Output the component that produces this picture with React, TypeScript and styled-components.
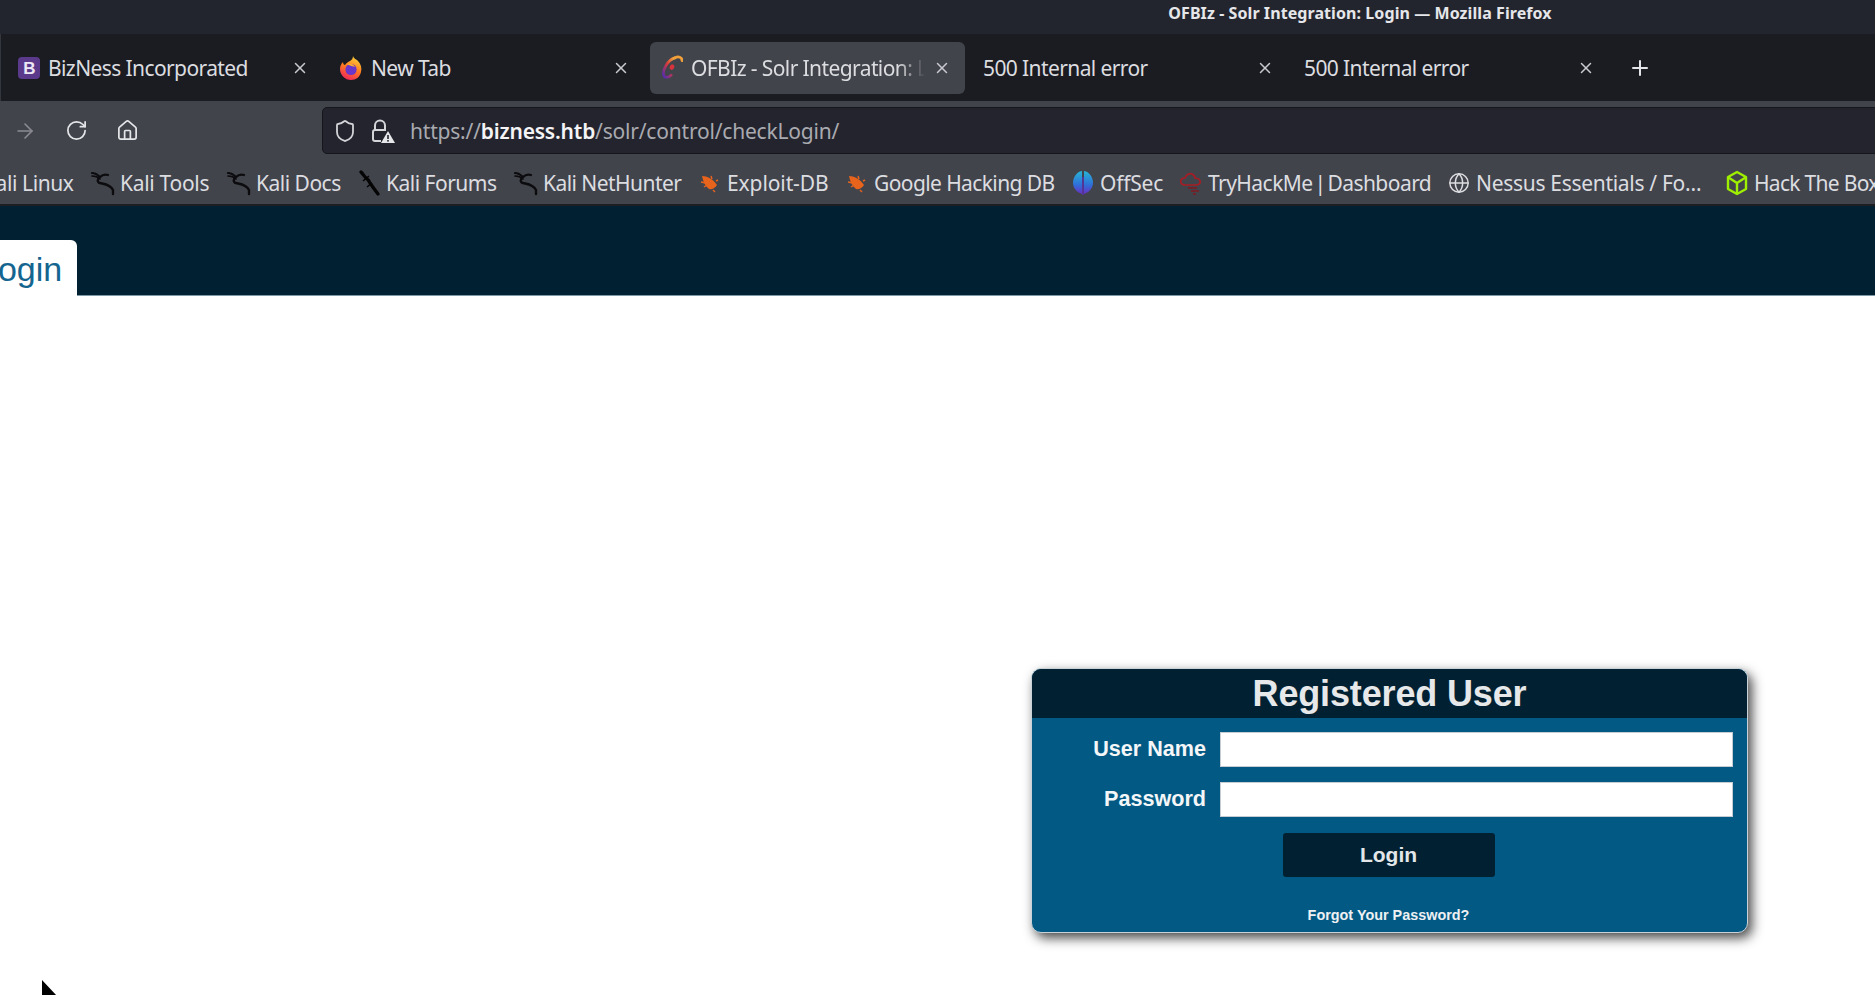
import React from 'react';
import styled, { createGlobalStyle } from 'styled-components';
import { Plus, X, ArrowRight, RotateCw, Home, Shield, Globe } from 'lucide-react';

const GlobalStyle = createGlobalStyle`
  html, body {
    margin: 0;
    padding: 0;
    height: 100%;
    overflow: hidden;
    background: #ffffff;
  }
  #root {
    height: 100%;
  }
`;

const Page = styled.div`
  position: relative;
  display: flex;
  flex-direction: column;
  width: 1875px;
  height: 995px;
  overflow: hidden;
  font-family: 'Noto Sans', sans-serif;
`;

const TitleBar = styled.div`
  height: 34px;
  flex: none;
  padding-left: 845px;
  display: flex;
  align-items: center;
  justify-content: center;
  background: #23252e;
  color: #e6e7ea;
  font-size: 16px;
  font-weight: 700;
  letter-spacing: 0.08px;
  padding-bottom: 8px;
  box-sizing: border-box;
`;

const TabStrip = styled.div`
  height: 67px;
  flex: none;
  display: flex;
  align-items: center;
  padding-left: 2px;
  background: #1b1c21;
  border-left: 1px solid #34363d;
  box-sizing: border-box;
`;

const Tab = styled.div<{ $active?: boolean }>`
  width: ${(p) => (p.$active ? '315px' : '321px')};
  margin: ${(p) => (p.$active ? '0 3px 0 5px' : '0')};
  height: 52px;
  flex: none;
  display: flex;
  align-items: center;
  gap: 8px;
  padding: 0 ${(p) => (p.$active ? '14px' : '15px')} 0 ${(p) => (p.$active ? '11px' : '15px')};
  box-sizing: border-box;
  border-radius: 6px;
  background: ${(p) => (p.$active ? '#42444c' : 'transparent')};
  color: #dcdde0;
  font-size: 21px;
  letter-spacing: -0.6px;
`;

const TabLabel = styled.span<{ $fade?: boolean }>`
  flex: 1;
  min-width: 0;
  overflow: hidden;
  white-space: nowrap;
  ${(p) =>
    p.$fade &&
    `
    -webkit-mask-image: linear-gradient(to right, #000 88%, transparent 100%);
    mask-image: linear-gradient(to right, #000 88%, transparent 100%);
  `}
`;

const TabClose = styled(X)`
  flex: none;
  color: #c9cad0;
`;

const NewTab = styled(Plus)`
  flex: none;
  margin-left: 18px;
  color: #e4e5e8;
`;

const NavBar = styled.div`
  height: 54px;
  flex: none;
  display: flex;
  align-items: center;
  padding-top: 5px;
  background: #42444c;
  box-sizing: border-box;
`;

const NavButton = styled.div<{ $width: number; $dim?: boolean }>`
  width: ${(p) => p.$width}px;
  flex: none;
  display: flex;
  justify-content: center;
  color: ${(p) => (p.$dim ? '#8b8c92' : '#e4e5e8')};
`;

const UrlBar = styled.div`
  flex: 1;
  height: 47px;
  margin-left: 170px;
  margin-right: -20px;
  display: flex;
  align-items: center;
  padding-left: 10px;
  background: #23242d;
  border: 1px solid #16171b;
  border-radius: 5px;
  box-sizing: border-box;
  font-size: 21px;
  letter-spacing: -0.2px;
  color: #a9aab0;
`;

const UrlIcon = styled.div<{ $gap: number }>`
  display: flex;
  flex: none;
  margin-right: ${(p) => p.$gap}px;
  color: #d3d4d8;
`;

const Host = styled.span`
  color: #f4f4f6;
  font-weight: 600;
`;

const BookmarkBar = styled.div`
  height: 51px;
  flex: none;
  display: flex;
  align-items: center;
  padding-top: 7px;
  margin-left: -44px;
  background: #42444c;
  border-bottom: 2px solid #1d1e23;
  box-sizing: border-box;
  color: #dcdde0;
  font-size: 21px;
  white-space: nowrap;
`;

const Bookmark = styled.div<{ $width: number; $tracking: number; $words?: number }>`
  width: ${(p) => p.$width}px;
  display: flex;
  align-items: center;
  gap: 5px;
  flex: none;
  letter-spacing: ${(p) => p.$tracking}px;
  word-spacing: ${(p) => p.$words ?? 0}px;
`;

const BookmarkIcon = styled.span`
  display: flex;
  flex: none;
  width: 24px;
  margin-left: -2px;
  justify-content: center;
`;

const SiteHeader = styled.div`
  height: 90px;
  flex: none;
  display: flex;
  align-items: flex-end;
  background: #012132;
  border-bottom: 1px solid #7f98a5;
  box-sizing: border-box;
`;

const SiteTab = styled.div`
  margin: 0 0 -1px -21px;
  height: 56px;
  display: flex;
  align-items: center;
  padding: 2px 15px 0 0;
  box-sizing: border-box;
  background: #ffffff;
  border-radius: 0 6px 0 0;
  color: #14658f;
  font-family: 'Liberation Sans', sans-serif;
  font-size: 34px;
`;

const Content = styled.div`
  flex: 1;
  padding: 372px 0 0 1031px;
  background: #ffffff;
`;

const LoginBox = styled.div`
  width: 717px;
  height: 265px;
  display: flex;
  flex-direction: column;
  box-sizing: border-box;
  background: #025a84;
  border: 1px solid #c9d2d8;
  border-radius: 10px;
  box-shadow: 4px 5px 12px rgba(0, 0, 0, 0.72);
  overflow: hidden;
  font-family: 'Liberation Sans', sans-serif;
  font-weight: 700;
`;

const BoxTitle = styled.div`
  height: 49px;
  flex: none;
  display: flex;
  align-items: center;
  justify-content: center;
  background: #012132;
  color: #e6e8ea;
  font-size: 36px;
  letter-spacing: -0.15px;
`;

const BoxBody = styled.div`
  flex: 1;
  display: flex;
  flex-direction: column;
  padding-top: 14px;
`;

const FormRow = styled.div`
  display: flex;
  align-items: center;
  height: 35px;
  margin-bottom: 15px;
`;

const FieldLabel = styled.label`
  width: 174px;
  flex: none;
  padding-bottom: 2px;
  text-align: right;
  color: #f4f6f8;
  font-size: 21.6px;
`;

const TextField = styled.input`
  width: 513px;
  height: 35px;
  margin-left: 14px;
  flex: none;
  padding: 0;
  box-sizing: border-box;
  background: #ffffff;
  border: 1px solid #c5cdd2;
  outline: none;
`;

const LoginButton = styled.button`
  align-self: center;
  width: 212px;
  height: 44px;
  margin: 1px 2px 0 0;
  padding: 0;
  border: none;
  border-radius: 3px;
  background: #012132;
  color: #e4e7e9;
  font-family: inherit;
  font-size: 21px;
  font-weight: 700;
`;

const ForgotLink = styled.a`
  align-self: center;
  margin: 30px 2px 0 0;
  color: #eef1f3;
  font-size: 14.4px;
`;

const Cursor = styled.svg`
  position: absolute;
  left: 41px;
  top: 980px;
`;

const BootstrapIcon = () => (
  <svg width="22" height="24" viewBox="0 0 22 24">
    <rect x="0" y="1" width="22" height="22" rx="4" fill="#5b3a8c" />
    <text x="11" y="18" fontFamily="Liberation Sans" fontWeight="700" fontSize="17" fill="#ece8f4" textAnchor="middle">
      B
    </text>
  </svg>
);

const FirefoxIcon = () => (
  <svg width="24" height="26" viewBox="0 0 24 26">
    <defs>
      <linearGradient id="ffBody" x1="0.7" y1="0" x2="0.3" y2="1">
        <stop offset="0" stopColor="#ffd43a" />
        <stop offset="0.5" stopColor="#ff7a1f" />
        <stop offset="1" stopColor="#f0245e" />
      </linearGradient>
    </defs>
    <path
      d="M14 1c1 3 3 3 5 5 3 3 4 7 3 11-1 5-5 8-10 8-6 0-11-5-11-11 0-3 1-5 3-7 0 2 1 3 2 3 1-2 3-3 5-4 2-1 3-3 3-5z"
      fill="url(#ffBody)"
    />
    <circle cx="12" cy="14.5" r="5.6" fill="#6a35c9" />
    <path d="M8 9c3-1 7 0 8 3-2-1-5-1-8-3z" fill="#ffb02a" />
  </svg>
);

const SolrIcon = () => (
  <svg width="22" height="28" viewBox="0 0 24 30" fill="none" style={{ flex: 'none' }}>
    <defs>
      <linearGradient id="solrRing" x1="0.9" y1="0" x2="0.1" y2="1">
        <stop offset="0" stopColor="#f5a73c" />
        <stop offset="0.45" stopColor="#d63a3a" />
        <stop offset="1" stopColor="#5a2da8" />
      </linearGradient>
    </defs>
    <path d="M15 4C8 6 1 17 3 23c1 3 5 3 8 0" stroke="url(#solrRing)" strokeWidth="3" strokeLinecap="round" />
    <path d="M15 4c4-2 8-1 8 3" stroke="#f0a03a" strokeWidth="3" strokeLinecap="round" />
    <ellipse cx="12" cy="14" rx="2.4" ry="3" fill="#d9333c" transform="rotate(30 12 14)" />
  </svg>
);

const LockWarnIcon = () => (
  <svg width="24" height="26" viewBox="0 0 24 26" fill="none">
    <path d="M4 12V7.500a5 5 0 0 1 10 0V12" stroke="#d3d4d8" strokeWidth="2" />
    <path d="M10 23H4a2 2 0 0 1-2-2v-7a2 2 0 0 1 2-2h11" stroke="#d3d4d8" strokeWidth="2" />
    <path d="M17 13l7 12H10z" fill="#e6e7ea" />
    <rect x="16.2" y="17" width="1.6" height="4" fill="#23242d" />
    <rect x="16.2" y="22" width="1.6" height="1.6" fill="#23242d" />
  </svg>
);

const KaliIcon = ({ variant }: { variant?: 'forum' }) =>
  variant === 'forum' ? (
    <svg width="22" height="26" viewBox="0 0 22 26" fill="none">
      <path d="M3 2c2 2 3 4 5 6 2 1 3 3 4 5 2 3 5 7 8 11" stroke="#050505" strokeWidth="3.2" strokeLinecap="round" />
      <path d="M5 11l6-5M9 17l5-4" stroke="#050505" strokeWidth="1.6" />
    </svg>
  ) : (
    <svg width="24" height="25" viewBox="0 0 24 25" fill="none" stroke="#0c0c0e" strokeLinecap="round">
      <path d="M1 2c3 0 6 2 8 4 2-2 5-3 8-2" strokeWidth="2.2" />
      <path d="M1 5c3 0 6 1 8 3" strokeWidth="1.7" />
      <path d="M9 6C6 8 6 11 9 12c4 1 10 1 13 7l0 4" strokeWidth="2.4" />
    </svg>
  );

const BugIcon = () => (
  <svg width="22" height="22" viewBox="0 0 22 22">
    <path d="M3 4c5 0 11 3 15 9-2 3-5 5-8 4-4-3-6-8-7-13z" fill="#e8641c" />
    <path d="M2 10l5 1M5 15l3-2M12 4l1 3M17 9l2-1M14 18l2 2" stroke="#e8641c" strokeWidth="1.4" />
  </svg>
);

const OffSecIcon = () => (
  <svg width="22" height="26" viewBox="0 0 22 26">
    <defs>
      <linearGradient id="offsec" x1="0" y1="0" x2="0" y2="1">
        <stop offset="0" stopColor="#27b5d6" />
        <stop offset="0.6" stopColor="#2f6fd8" />
        <stop offset="1" stopColor="#6a2fc4" />
      </linearGradient>
    </defs>
    <path d="M10 1C4 2 1 8 1 13c0 5 4 9 7 10l2 1zM12 1c6 1 9 7 9 12 0 5-4 9-7 10l-2 1z" fill="url(#offsec)" />
    <path d="M11 7v18" stroke="#5a2fb4" strokeWidth="1.4" />
  </svg>
);

const TryHackMeIcon = () => (
  <svg width="24" height="26" viewBox="0 0 24 26" fill="none">
    <path
      d="M6 15c-3 0-5-2-4-5 1-2 3-2 4-2 1-3 4-5 7-4 2 1 3 3 3 4 3 0 6 2 5 5-1 2-2 2-4 2H6z"
      stroke="#a81c24"
      strokeWidth="1.7"
    />
    <path d="M9 18h9M12 21h8M14 24h3" stroke="#7c1a20" strokeWidth="1.5" />
  </svg>
);

const HtbIcon = () => (
  <svg width="22" height="26" viewBox="0 0 22 26" fill="none" stroke="#9fef00" strokeWidth="2.4" strokeLinejoin="round">
    <path d="M11 2l9 5v12l-9 5-9-5V7z" />
    <path d="M2.500 7.500L11 13l8.500-5.500M11 13v10" />
  </svg>
);

const bookmarks: { label: string; width: number; tracking: number; words?: number; icon: React.ReactNode }[] = [
  { label: 'Kali Linux', width: 137, tracking: -0.4, icon: <KaliIcon /> },
  { label: 'Kali Tools', width: 136, tracking: -0.3, icon: <KaliIcon /> },
  { label: 'Kali Docs', width: 130, tracking: -0.5, icon: <KaliIcon /> },
  { label: 'Kali Forums', width: 157, tracking: -0.5, icon: <KaliIcon variant="forum" /> },
  { label: 'Kali NetHunter', width: 184, tracking: -0.55, icon: <KaliIcon /> },
  { label: 'Exploit-DB', width: 147, tracking: -0.1, icon: <BugIcon /> },
  { label: 'Google Hacking DB', width: 226, tracking: -0.6, icon: <BugIcon /> },
  { label: 'OffSec', width: 108, tracking: -0.2, icon: <OffSecIcon /> },
  { label: 'TryHackMe | Dashboard', width: 268, tracking: -0.55, words: -3, icon: <TryHackMeIcon /> },
  { label: 'Nessus Essentials / Fo…', width: 278, tracking: -0.3, icon: <Globe size={22} color="#dcdde0" strokeWidth={1.6} /> },
  { label: 'Hack The Box', width: 160, tracking: -0.7, icon: <HtbIcon /> },
];

export default function App() {
  return (
    <Page>
      <GlobalStyle />
      <TitleBar>OFBIz - Solr Integration: Login — Mozilla Firefox</TitleBar>
      <TabStrip>
        <Tab>
          <BootstrapIcon />
          <TabLabel>BizNess Incorporated</TabLabel>
          <TabClose size={18} />
        </Tab>
        <Tab>
          <FirefoxIcon />
          <TabLabel>New Tab</TabLabel>
          <TabClose size={18} />
        </Tab>
        <Tab $active>
          <SolrIcon />
          <TabLabel $fade>OFBIz - Solr Integration: Login</TabLabel>
          <TabClose size={18} />
        </Tab>
        <Tab>
          <TabLabel>500 Internal error</TabLabel>
          <TabClose size={18} />
        </Tab>
        <Tab>
          <TabLabel>500 Internal error</TabLabel>
          <TabClose size={18} />
        </Tab>
        <NewTab size={24} />
      </TabStrip>
      <NavBar>
        <NavButton $width={50} $dim>
          <ArrowRight size={24} strokeWidth={1.6} />
        </NavButton>
        <NavButton $width={52}>
          <RotateCw size={23} strokeWidth={1.8} />
        </NavButton>
        <NavButton $width={50}>
          <Home size={23} strokeWidth={1.8} />
        </NavButton>
        <UrlBar>
          <UrlIcon $gap={14}>
            <Shield size={24} strokeWidth={1.8} />
          </UrlIcon>
          <UrlIcon $gap={15}>
            <LockWarnIcon />
          </UrlIcon>
          <span>
            https://<Host>bizness.htb</Host>/solr/control/checkLogin/
          </span>
        </UrlBar>
      </NavBar>
      <BookmarkBar>
        {bookmarks.map((b) => (
          <Bookmark key={b.label} $width={b.width} $tracking={b.tracking} $words={b.words}>
            <BookmarkIcon>{b.icon}</BookmarkIcon>
            {b.label}
          </Bookmark>
        ))}
      </BookmarkBar>
      <SiteHeader>
        <SiteTab>Login</SiteTab>
      </SiteHeader>
      <Content>
        <LoginBox>
          <BoxTitle>Registered User</BoxTitle>
          <BoxBody>
            <FormRow>
              <FieldLabel>User Name</FieldLabel>
              <TextField type="text" />
            </FormRow>
            <FormRow>
              <FieldLabel>Password</FieldLabel>
              <TextField type="password" />
            </FormRow>
            <LoginButton>Login</LoginButton>
            <ForgotLink>Forgot Your Password?</ForgotLink>
          </BoxBody>
        </LoginBox>
      </Content>
      <Cursor width="24" height="24" viewBox="0 0 24 24">
        <path d="M1 0v22l6-6h9z" fill="#000" />
      </Cursor>
    </Page>
  );
}
